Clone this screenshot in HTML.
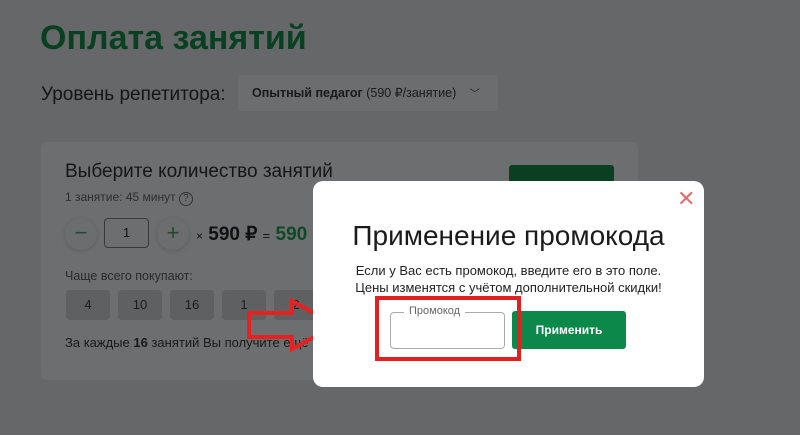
<!DOCTYPE html>
<html><head><meta charset="utf-8"><style>
*{margin:0;padding:0;box-sizing:border-box}
body{width:800px;height:435px;overflow:hidden;background:#666768;font-family:"Liberation Sans",sans-serif;position:relative}
.a{position:absolute}
.chip{position:absolute;top:290px;width:44px;height:30px;background:#5f6061;border-radius:4px;color:#1c1c1c;font-size:13px;text-align:center;line-height:30px}
.circ{position:absolute;width:32px;height:32px;border-radius:50%;background:#6c6d6e;box-shadow:0 1px 4px rgba(0,0,0,.15);text-align:center;line-height:30px;font-size:22px;color:#1c4a2c}
</style></head><body>
<div class="a" style="left:40px;top:19px;font-size:34px;color:#0a4022;font-weight:600">Оплата занятий</div>
<div class="a" style="left:41px;top:84px;font-size:19px;color:#151515">Уровень репетитора:</div>
<div class="a" style="left:238px;top:75px;width:260px;height:36px;background:#6c6d6e;border-radius:4px;font-size:12.5px;line-height:36px;padding-left:14px;color:#1a1a1a"><b>Опытный педагог</b> (590 ₽/занятие) <span style="margin-left:10px;font-size:10px">﹀</span></div>
<div class="a" style="left:41px;top:142px;width:597px;height:238px;background:#6d6e6f;border-radius:6px"></div>
<div class="a" style="left:509px;top:165px;width:105px;height:30px;background:#0b3f22;border-radius:3px"></div>
<div class="a" style="left:65px;top:161px;font-size:19px;color:#161616">Выберите количество занятий</div>
<div class="a" style="left:65px;top:190px;font-size:12px;color:#2e2e2e">1 занятие: 45 минут <span style="display:inline-block;width:14px;height:14px;border:1px solid #333;border-radius:50%;font-size:10px;text-align:center;line-height:12px">?</span></div>
<div class="circ" style="left:65px;top:218px">−</div>
<div class="a" style="left:104px;top:218px;width:45px;height:30px;border:1px solid #3a3a3a;border-radius:4px;text-align:center;line-height:28px;font-size:13px;color:#111">1</div>
<div class="circ" style="left:157px;top:218px">+</div>
<div class="a" style="left:196px;top:223px;font-size:19px;color:#111;font-weight:600"><span style="font-size:12px;font-weight:normal">×</span> 590 ₽ <span style="font-size:13px;font-weight:normal">=</span> <span style="color:#0d4a28">590</span></div>
<div class="a" style="left:65px;top:269px;font-size:12.5px;color:#2a2a2a">Чаще всего покупают:</div>
<div class="chip" style="left:66px">4</div><div class="chip" style="left:118px">10</div><div class="chip" style="left:170px">16</div><div class="chip" style="left:222px">1</div><div class="chip" style="left:274px">2</div>
<div class="a" style="left:65px;top:335px;font-size:13px;color:#1a1a1a">За каждые <b>16</b> занятий Вы получите ещё</div>
<svg class="a" style="left:246px;top:298px" width="96" height="56"><polygon points="3,15 46,15 46,3 90,27 46,51 46,39 3,39" fill="none" stroke="#e8201f" stroke-width="4" stroke-linejoin="miter"/></svg>
<div class="a" style="left:313px;top:181px;width:391px;height:206px;background:#fff;border-radius:10px"></div>
<div class="a" style="left:677px;top:186px;font-size:22px;color:#e07070">✕</div>
<div class="a" style="left:313px;top:220px;width:391px;text-align:center;font-size:28px;color:#1b1b1b;font-weight:500">Применение промокода</div>
<div class="a" style="left:313px;top:262px;width:391px;text-align:center;font-size:13px;line-height:17px;color:#222">Если у Вас есть промокод, введите его в это поле.<br>Цены изменятся с учётом дополнительной скидки!</div>
<div class="a" style="left:390px;top:312px;width:115px;height:37px;border:1px solid #aaa;border-radius:4px"></div>
<div class="a" style="left:404px;top:305px;background:#fff;padding:0 5px;font-size:11px;color:#666">Промокод</div>
<div class="a" style="left:512px;top:311px;width:114px;height:38px;background:#0c884b;border-radius:3px;color:#fff;font-size:12px;font-weight:bold;text-align:center;line-height:38px">Применить</div>
<div class="a" style="left:375px;top:296px;width:146px;height:65px;border:4px solid #e3201f"></div>
</body></html>
